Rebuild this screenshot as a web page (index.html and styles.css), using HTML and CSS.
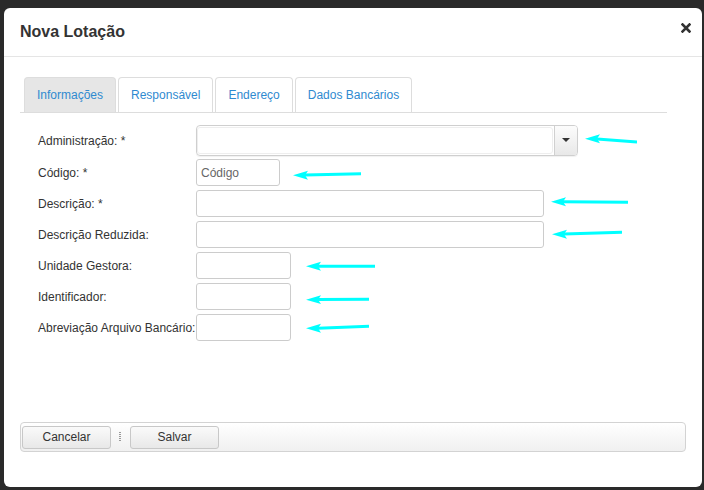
FILE: index.html
```html
<!DOCTYPE html>
<html lang="pt">
<head>
<meta charset="utf-8">
<title>Nova Lotação</title>
<link rel="stylesheet" href="styles.css">
</head>
<body>
<div class="modal">
  <div class="modal-header">
    <h1 class="modal-title">Nova Lotação</h1>
    <svg class="close" width="10" height="10" viewBox="0 0 10 10"><path d="M1.5 1.5 L8.5 8.5 M8.5 1.5 L1.5 8.5" stroke="#333" stroke-width="2.6" stroke-linecap="square"/></svg>
  </div>
  <div class="modal-body">
    <div class="tabs">
      <ul class="tab-list">
        <li class="tab active">Informações</li>
        <li class="tab">Responsável</li>
        <li class="tab">Endereço</li>
        <li class="tab">Dados Bancários</li>
      </ul>
    </div>
    <div class="form">
      <div class="row row-admin">
        <label class="label">Administração: *</label>
        <div class="combo">
          <span class="combo-input"></span>
          <span class="combo-btn"><span class="caret"></span></span>
        </div>
        <svg class="arrow a1" width="52" height="14" viewBox="0 0 52 14"><path d="M0 4.7 L15 0.2 L12 4.7 L15 9.2 Z" fill="#0ff"/><path d="M12 4.9 L52 8" stroke="#0ff" stroke-width="3"/></svg>
      </div>
      <div class="row">
        <label class="label">Código: *</label>
        <input class="field w-code" placeholder="Código">
        <svg class="arrow a2" width="68" height="14" viewBox="0 0 68 14"><path d="M0 9.3 L15 4.8 L12 9.3 L15 13.8 Z" fill="#0ff"/><path d="M12 9.1 L68 7.7" stroke="#0ff" stroke-width="3"/></svg>
      </div>
      <div class="row">
        <label class="label">Descrição: *</label>
        <input class="field w-long">
        <svg class="arrow a3" width="77" height="14" viewBox="0 0 77 14"><path d="M0 4.7 L15 0.2 L12 4.7 L15 9.2 Z" fill="#0ff"/><path d="M12 4.7 L77 5.3" stroke="#0ff" stroke-width="3"/></svg>
      </div>
      <div class="row">
        <label class="label">Descrição Reduzida:</label>
        <input class="field w-long">
        <svg class="arrow a4" width="70" height="14" viewBox="0 0 70 14"><path d="M0 6.3 L15 1.8 L12 6.3 L15 10.8 Z" fill="#0ff"/><path d="M12 6.1 L70 4.3" stroke="#0ff" stroke-width="3"/></svg>
      </div>
      <div class="row">
        <label class="label">Unidade Gestora:</label>
        <input class="field w-short">
        <svg class="arrow a5" width="69" height="14" viewBox="0 0 69 14"><path d="M0 7.3 L15 2.8 L12 7.3 L15 11.8 Z" fill="#0ff"/><path d="M12 7.3 L69 7.3" stroke="#0ff" stroke-width="3"/></svg>
      </div>
      <div class="row">
        <label class="label">Identificador:</label>
        <input class="field w-short">
        <svg class="arrow a5" width="63" height="14" viewBox="0 0 63 14"><path d="M0 9.7 L15 5.2 L12 9.7 L15 14 Z" fill="#0ff"/><path d="M12 9.6 L63 9.3" stroke="#0ff" stroke-width="3"/></svg>
      </div>
      <div class="row">
        <label class="label">Abreviação Arquivo Bancário:</label>
        <input class="field w-short">
        <svg class="arrow a5" width="63" height="14" viewBox="0 0 63 14"><path d="M0 7.3 L15 2.8 L12 7.3 L15 11.8 Z" fill="#0ff"/><path d="M12 7.2 L63 5.3" stroke="#0ff" stroke-width="3"/></svg>
      </div>
    </div>
  </div>
  <div class="toolbar">
    <button class="btn">Cancelar</button>
    <span class="sep"></span>
    <button class="btn">Salvar</button>
  </div>
</div>
</body>
</html>
```
FILE: styles.css
```css
html, body {
  margin: 0;
  height: 100%;
}
body {
  background: #2a2a2a;
  padding: 8px 0 0 4px;
  box-sizing: border-box;
  font-family: "Liberation Sans", Arial, sans-serif;
  font-size: 12px;
  color: #333;
}
.modal {
  width: 698px;
  height: 479px;
  background: #fff;
  border-radius: 6px;
  display: flex;
  flex-direction: column;
  box-sizing: border-box;
  overflow: hidden;
}
.modal-header {
  height: 49px;
  flex: none;
  box-sizing: border-box;
  border-bottom: 1px solid #e5e5e5;
  display: flex;
  align-items: center;
  justify-content: space-between;
  padding: 0 11px 0 16px;
}
.modal-title {
  margin: 0;
  font-size: 16px;
  font-weight: bold;
  color: #333;
  line-height: 20px;
}
.close {
  display: block;
  margin-top: -9px;
}
.modal-body {
  flex: 1;
  padding: 20px 16px 0 16px;
}
.tabs {
  width: 647px;
  border-bottom: 1px solid #ddd;
}
.tab-list {
  list-style: none;
  margin: 0;
  padding: 0 0 0 4px;
  display: flex;
}
.tab {
  height: 35px;
  box-sizing: border-box;
  border: 1px solid #ddd;
  border-bottom: none;
  border-radius: 4px 4px 0 0;
  padding: 0 12px;
  margin-right: 2px;
  display: flex;
  align-items: center;
  color: #2f8ad0;
  font-size: 12px;
  background: #fff;
}
.tab.active {
  background: #e6e6e6;
}
.form {
  padding: 12px 0 0 18px;
}
.row {
  display: flex;
  align-items: center;
  height: 27px;
  margin-bottom: 4px;
}
.row-admin {
  height: 31px;
  margin-bottom: 3px;
}
.label {
  width: 158px;
  flex: none;
  font-size: 12px;
  color: #333;
  white-space: nowrap;
}
.field {
  height: 27px;
  box-sizing: border-box;
  border: 1px solid #ccc;
  border-radius: 3px;
  padding: 0 4px;
  font-family: "Liberation Sans", Arial, sans-serif;
  font-size: 12px;
  color: #333;
  margin: 0;
  outline: none;
  background: #fff;
}
.field::placeholder {
  color: #666;
}
.w-code { width: 84px; }
.w-long { width: 348px; }
.w-short { width: 95px; }
.combo {
  width: 382px;
  height: 31px;
  box-sizing: border-box;
  border: 1px solid #cfcfcf;
  border-radius: 4px;
  display: flex;
  overflow: hidden;
  box-shadow: 0 1px 1px rgba(0,0,0,0.06);
}
.combo-input {
  flex: 1;
  border: 1px solid #eee;
  border-radius: 3px;
  margin: 1px 1px 1px 0;
}
.combo-btn {
  width: 22px;
  border-left: 1px solid #d0d0d0;
  background: linear-gradient(#fcfcfc, #e8e8e8);
  display: flex;
  align-items: center;
  justify-content: center;
}
.caret {
  width: 0;
  height: 0;
  border-left: 4px solid transparent;
  border-right: 4px solid transparent;
  border-top: 4px solid #333;
  margin-top: -2px;
}
.arrow {
  flex: none;
  display: block;
}
.a1 { margin-left: 7px; }
.a2 { margin-left: 13px; }
.a3 { margin-left: 7px; }
.a4 { margin-left: 8px; }
.a5 { margin-left: 15px; }
.toolbar {
  flex: none;
  margin: 0 16px 35px 16px;
  height: 30px;
  box-sizing: border-box;
  border: 1px solid #d3d3d3;
  border-radius: 4px;
  background: linear-gradient(#ffffff, #f0f0f0);
  display: flex;
  align-items: center;
  padding: 0 1px;
}
.btn {
  width: 89px;
  height: 23px;
  box-sizing: border-box;
  border: 1px solid #c8c8c8;
  border-radius: 3px;
  background: linear-gradient(#fafafa, #e8e8e8);
  font-family: "Liberation Sans", Arial, sans-serif;
  font-size: 12px;
  color: #333;
  padding: 0;
  margin: 0;
}
.sep {
  width: 2px;
  height: 10px;
  margin: 0 9px 0 8px;
  background: repeating-linear-gradient(#999 0 1px, transparent 1px 2px);
}
```
